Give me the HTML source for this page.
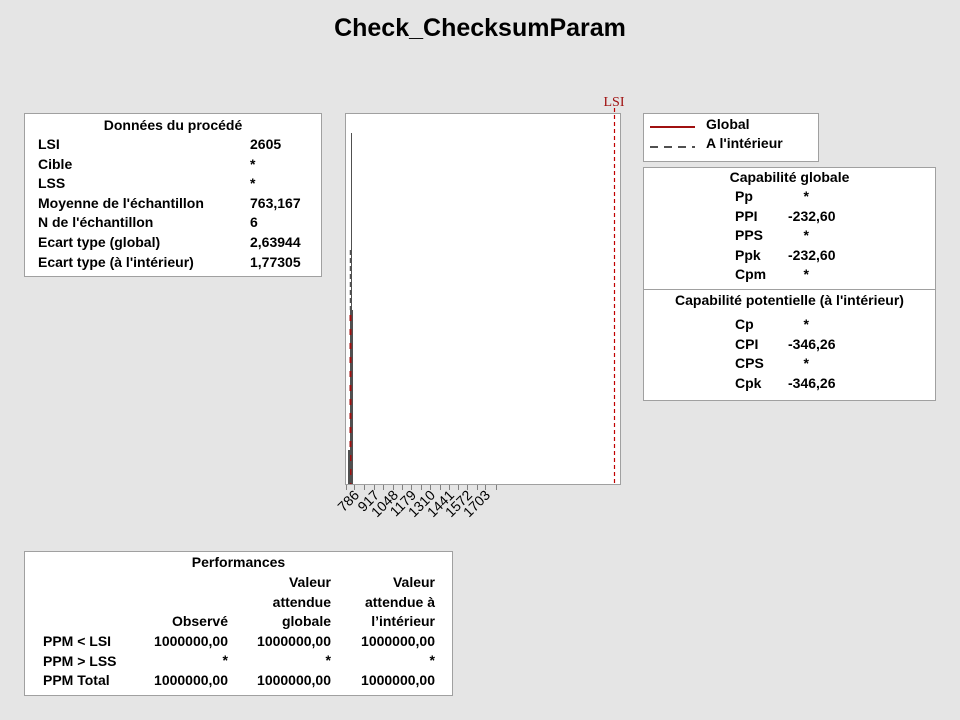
<!DOCTYPE html>
<html><head><meta charset="utf-8"><style>
body{margin:0;width:960px;height:720px;background:#e5e5e5;position:relative;overflow:hidden;font-family:"Segoe UI","Liberation Sans",sans-serif;font-weight:bold;font-size:14px;color:#000}
.a{position:absolute;white-space:nowrap;line-height:19px}
.box{position:absolute;background:#fff;border:1px solid #a0a0a0;box-sizing:border-box}
.r{text-align:right}
.c{text-align:center}
</style></head><body>
<div class="a" style="left:0;width:960px;top:13px;font-size:25px;line-height:30px;text-align:center">Check_ChecksumParam</div>

<div class="box" style="left:24px;top:113px;width:298px;height:164px"></div>
<div class="a c" style="left:24px;width:298px;top:116px">Données du procédé</div>
<div class="a" style="left:38px;top:135px;line-height:19.6px">LSI<br>Cible<br>LSS<br>Moyenne de l'échantillon<br>N de l'échantillon<br>Ecart type (global)<br>Ecart type (à l'intérieur)</div>
<div class="a" style="left:250px;top:135px;line-height:19.6px">2605<br>*<br>*<br>763,167<br>6<br>2,63944<br>1,77305</div>

<div class="box" style="left:345px;top:113px;width:276px;height:372px"></div>
<svg style="position:absolute;left:0;top:0" width="960" height="720">
<line x1="614.5" y1="108" x2="614.5" y2="484" stroke="#c00000" stroke-width="1.2" stroke-dasharray="4,3"/>
<line x1="351.5" y1="133" x2="351.5" y2="484" stroke="#505050" stroke-width="1"/>
<line x1="350.5" y1="250" x2="350.5" y2="310" stroke="#505050" stroke-width="1.5" stroke-dasharray="5,3"/>
<rect x="350" y="310" width="3" height="174" fill="#505050"/>
<line x1="350.5" y1="315" x2="350.5" y2="484" stroke="#a01010" stroke-width="2" stroke-dasharray="6,8"/>
<rect x="348" y="450" width="2" height="34" fill="#505050"/>
<g stroke="#808080" stroke-width="1">
<line x1="346.5" y1="485" x2="346.5" y2="490"/><line x1="354.5" y1="485" x2="354.5" y2="490"/><line x1="364.5" y1="485" x2="364.5" y2="490"/><line x1="374.5" y1="485" x2="374.5" y2="490"/><line x1="383.5" y1="485" x2="383.5" y2="490"/><line x1="393.5" y1="485" x2="393.5" y2="490"/><line x1="402.5" y1="485" x2="402.5" y2="490"/><line x1="411.5" y1="485" x2="411.5" y2="490"/><line x1="421.5" y1="485" x2="421.5" y2="490"/><line x1="430.5" y1="485" x2="430.5" y2="490"/><line x1="440.5" y1="485" x2="440.5" y2="490"/><line x1="449.5" y1="485" x2="449.5" y2="490"/><line x1="458.5" y1="485" x2="458.5" y2="490"/><line x1="467.5" y1="485" x2="467.5" y2="490"/><line x1="477.5" y1="485" x2="477.5" y2="490"/><line x1="485.5" y1="485" x2="485.5" y2="490"/><line x1="496.5" y1="485" x2="496.5" y2="490"/>
</g>
<g font-family="Segoe UI, Liberation Sans, sans-serif" font-size="14" font-weight="normal" text-anchor="end">
<text transform="translate(360,496) rotate(-45)">786</text>
<text transform="translate(380,496) rotate(-45)">917</text>
<text transform="translate(399,496) rotate(-45)">1048</text>
<text transform="translate(417,496) rotate(-45)">1179</text>
<text transform="translate(436,496) rotate(-45)">1310</text>
<text transform="translate(455,496) rotate(-45)">1441</text>
<text transform="translate(473,496) rotate(-45)">1572</text>
<text transform="translate(491,496) rotate(-45)">1703</text>
</g>
<text x="614" y="106" font-family="Liberation Serif, serif" font-size="14" font-weight="normal" fill="#a01010" text-anchor="middle">LSI</text>
</svg>

<div class="box" style="left:643px;top:113px;width:176px;height:49px"></div>
<svg style="position:absolute;left:650px;top:120px" width="50" height="35"><line x1="0" y1="7" x2="45" y2="7" stroke="#a01010" stroke-width="2"/><line x1="0" y1="27" x2="45" y2="27" stroke="#505050" stroke-width="2" stroke-dasharray="8,6"/></svg>
<div class="a" style="left:706px;top:115px">Global<br>A l'intérieur</div>

<div class="box" style="left:643px;top:167px;width:293px;height:234px"></div>
<div style="position:absolute;left:644px;top:289px;width:291px;height:1px;background:#a0a0a0"></div>
<div class="a c" style="left:643px;width:293px;top:168px">Capabilité globale</div>
<div class="a" style="left:735px;top:187px;line-height:19.6px">Pp<br>PPI<br>PPS<br>Ppk<br>Cpm</div>
<div class="a" style="left:788px;top:187px;line-height:19.6px">&nbsp; &nbsp; *<br>-232,60<br>&nbsp; &nbsp; *<br>-232,60<br>&nbsp; &nbsp; *</div>
<div class="a c" style="left:643px;width:293px;top:291px">Capabilité potentielle (à l'intérieur)</div>
<div class="a" style="left:735px;top:315px;line-height:19.6px">Cp<br>CPI<br>CPS<br>Cpk</div>
<div class="a" style="left:788px;top:315px;line-height:19.6px">&nbsp; &nbsp; *<br>-346,26<br>&nbsp; &nbsp; *<br>-346,26</div>

<div class="box" style="left:24px;top:551px;width:429px;height:145px"></div>
<div class="a c" style="left:24px;width:429px;top:553px">Performances</div>
<div class="a" style="left:43px;top:632px;line-height:19.6px">PPM &lt; LSI<br>PPM &gt; LSS<br>PPM Total</div>
<div class="a r" style="left:120px;width:108px;top:612px;line-height:19.6px">Observé<br>1000000,00<br>*<br>1000000,00</div>
<div class="a r" style="left:220px;width:111px;top:573px;line-height:19.6px">Valeur<br>attendue<br>globale<br>1000000,00<br>*<br>1000000,00</div>
<div class="a r" style="left:320px;width:115px;top:573px;line-height:19.6px">Valeur<br>attendue à<br>l’intérieur<br>1000000,00<br>*<br>1000000,00</div>
</body></html>
